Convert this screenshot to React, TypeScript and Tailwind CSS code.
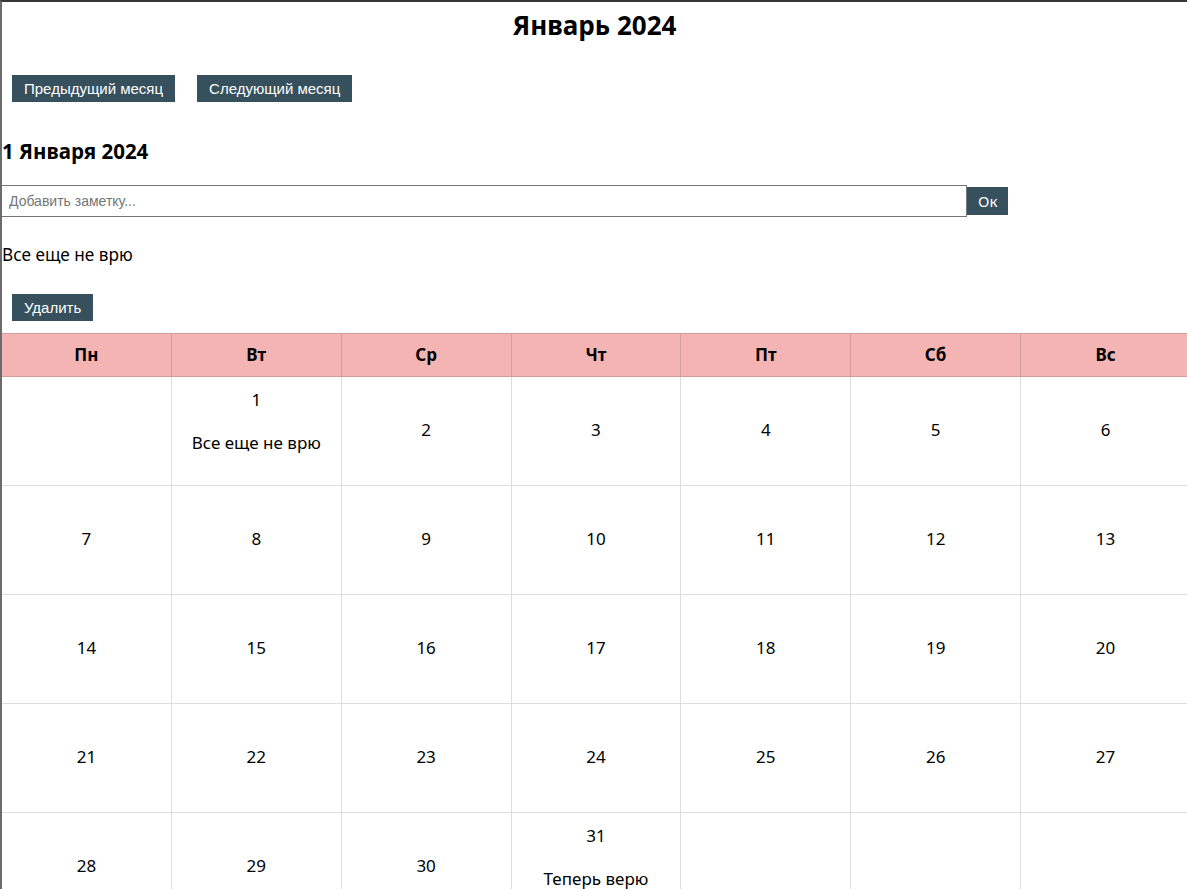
import React from "react";

const weekDays = ["Пн", "Вт", "Ср", "Чт", "Пт", "Сб", "Вс"];

const notes: Record<number, string> = {
  1: "Все еще не врю",
  31: "Теперь верю",
};

function buildWeeks(): (number | null)[][] {
  const cells: (number | null)[] = [null];
  for (let d = 1; d <= 31; d++) cells.push(d);
  while (cells.length % 7 !== 0) cells.push(null);
  const weeks: (number | null)[][] = [];
  for (let i = 0; i < cells.length; i += 7) weeks.push(cells.slice(i, i + 7));
  return weeks;
}

function NavButton({ children }: { children: React.ReactNode }) {
  return (
    <button className="bg-[#37505d] text-white text-[15px] leading-[17px] px-[12px] py-[5px] font-['Liberation_Sans',Arial,sans-serif]">
      {children}
    </button>
  );
}

export default function App() {
  const weeks = buildWeeks();

  return (
    <div className="w-[1187px] h-[889px] overflow-hidden bg-white border-t-2 border-l-2 border-t-[#383838] border-l-[#6b6b6b] font-['Noto_Sans',sans-serif] text-black">
      {/* Header */}
      <h1 className="text-center text-[26px] font-bold leading-[32px] pt-[7px]">
        Январь 2024
      </h1>

      <div className="flex gap-[22px] pl-[10px] mt-[34px]">
        <NavButton>Предыдущий месяц</NavButton>
        <NavButton>Следующий месяц</NavButton>
      </div>

      {/* Selected day */}
      <h2 className="text-[20.5px] font-bold leading-[26px] mt-[36px]">
        1 Января 2024
      </h2>

      <div className="flex items-center mt-[21px] -ml-[1px]">
        <input
          placeholder="Добавить заметку..."
          className="w-[966px] h-[32px] border border-[#767676] px-[7px] text-[14px] placeholder:text-[#757575] font-['Liberation_Sans',Arial,sans-serif] outline-none"
        />
        <button className="bg-[#37505d] text-white text-[15px] leading-[18px] h-[28px] px-[11px]">
          Ок
        </button>
      </div>

      <p className="text-[17.2px] leading-[23px] mt-[26px]">Все еще не врю</p>

      <div className="pl-[10px] mt-[28px]">
        <NavButton>Удалить</NavButton>
      </div>

      {/* Calendar */}
      <table className="mt-[12px] -ml-[1px] w-[1190px] table-fixed border-collapse text-[17px]">
        <thead>
          <tr>
            {weekDays.map((d) => (
              <th
                key={d}
                className="h-[43px] bg-[#f4b4b4] border border-[#d39c9c] font-bold"
              >
                {d}
              </th>
            ))}
          </tr>
        </thead>
        <tbody>
          {weeks.map((week, wi) => (
            <tr key={wi}>
              {week.map((day, di) => (
                <td
                  key={di}
                  className="h-[109px] border border-[#dddddd] text-center align-middle"
                >
                  {day !== null && (
                    <div className="flex flex-col items-center gap-[20px] -mt-[4px]">
                      <span className="leading-[23px]">{day}</span>
                      {notes[day] && (
                        <span className="leading-[23px] mb-[16px]">{notes[day]}</span>
                      )}
                    </div>
                  )}
                </td>
              ))}
            </tr>
          ))}
        </tbody>
      </table>
    </div>
  );
}
